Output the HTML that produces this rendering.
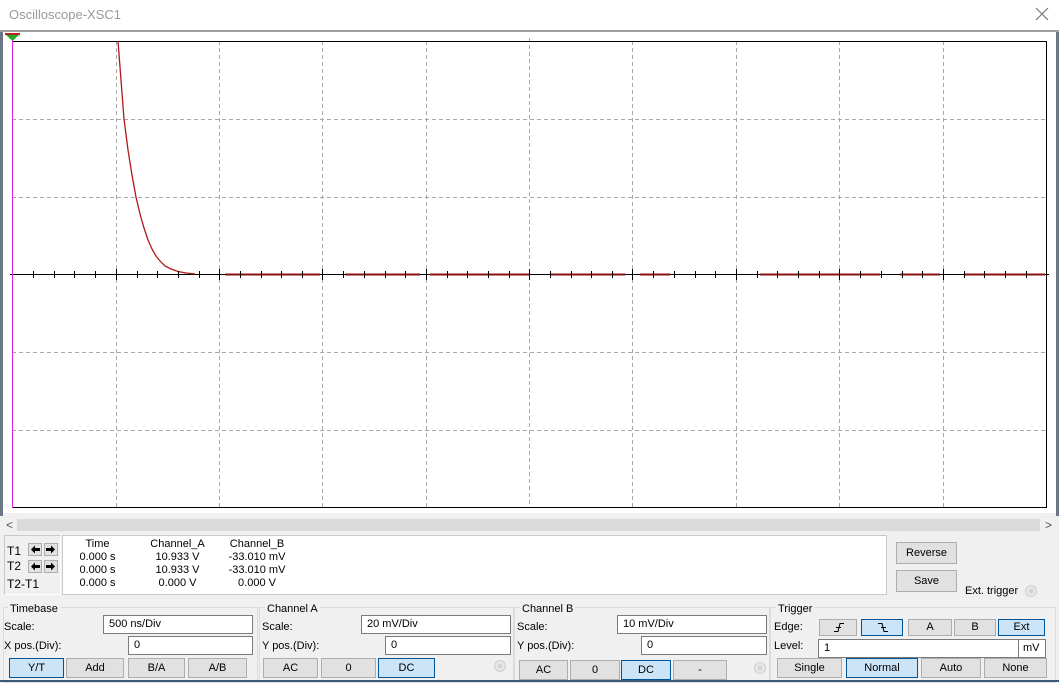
<!DOCTYPE html>
<html><head><meta charset="utf-8"><style>
*{margin:0;padding:0;box-sizing:border-box}
body{width:1059px;height:682px;background:#f0f0f0;font-family:"Liberation Sans",Tahoma,sans-serif;font-size:11px;color:#000;position:relative;overflow:hidden}
.a{position:absolute;white-space:nowrap}
.b{position:absolute;background:#e1e1e1;border:1px solid #adadad;text-align:center;font-size:11px}
.s{background:#cce4f7;border-color:#005499}
.i{position:absolute;background:#fff;border:1px solid #7a7a7a;padding-left:5px;font-size:11px}
.g{position:absolute;border:1px solid #dcdcdc;border-top-color:#dcdcdc}
.gt{position:absolute;background:#f0f0f0;padding:0 2px;font-size:11px}
.r{position:absolute;width:12px;height:12px;border-radius:50%;background:#e6e6e6;border:1px solid #cfcfcf}
.r::after{content:"";position:absolute;left:3px;top:3px;width:4px;height:4px;border-radius:50%;background:#d0d0d0}
.b svg{display:block}
</style></head><body>
<div class="a" style="left:0;top:0;width:1059px;height:30px;background:#fff"></div>
<div class="a" style="left:9px;top:7px;font-size:13px;color:#999">Oscilloscope-XSC1</div>
<svg class="a" style="left:1035px;top:7px" width="14" height="14"><path d="M1 1L13 13M13 1L1 13" stroke="#777" stroke-width="1.2"/></svg>
<div class="a" style="left:0;top:30px;width:1059px;height:2px;background:#a0a0a0"></div>
<div class="a" style="left:0;top:32px;width:3px;height:484px;background:#6b7785"></div>
<div class="a" style="left:1056px;top:32px;width:3px;height:484px;background:#6b7785"></div>
<div class="a" style="left:3px;top:32px;width:1053px;height:481px;background:#fff"></div>
<svg class="a" style="left:0;top:0" width="1059" height="520">
<g stroke="#a8a8a8" stroke-dasharray="4,3" stroke-width="1">
<path d="M116.5 41V508M219.5 41V508M322.5 41V508M426.5 41V508M632.5 41V508M736.5 41V508M839.5 41V508M943.5 41V508"/>
<path d="M12 119.5H1047M12 197.5H1047M12 352.5H1047M12 430.5H1047"/>
</g>
<path d="M529.5 38V508" stroke="#a8a8a8" stroke-dasharray="4,3"/>
<rect x="12.5" y="41.5" width="1034" height="466" fill="none" stroke="#000"/>
<path d="M10 274.5H1049" stroke="#000"/>
<path d="M12.5 36V508" stroke="#e020e0"/>
<polygon points="5,34 20,34 12.5,41" fill="#2a2"/><path d="M5 34H20" stroke="#b22" stroke-width="2"/>
<polyline fill="none" stroke="#b01818" stroke-width="1.3" points="118,41 121,80 124,119 128,150 132,175 136,197 140,214 144,228 148,240 152,249 156,256 160,261 165,266 171,269 178,271.5 186,273 195,274"/>
<g stroke="#8a1010" stroke-width="2">
<path d="M225 274.5H320M345 274.5H420M430 274.5H530M550 274.5H625M640 274.5H670M760 274.5H880M900 274.5H940M965 274.5H1045"/>
</g>
<g stroke="#000" stroke-width="1">
<path d="M33.5 271V278M54.5 271V278M74.5 271V278M95.5 271V278M137.5 271V278M157.5 271V278M178.5 271V278M199.5 271V278M240.5 271V278M261.5 271V278M281.5 271V278M302.5 271V278M343.5 271V278M364.5 271V278M385.5 271V278M405.5 271V278M447.5 271V278M467.5 271V278M488.5 271V278M509.5 271V278M550.5 271V278M571.5 271V278M591.5 271V278M612.5 271V278M653.5 271V278M674.5 271V278M695.5 271V278M715.5 271V278M757.5 271V278M777.5 271V278M798.5 271V278M819.5 271V278M860.5 271V278M881.5 271V278M902.5 271V278M922.5 271V278M964.5 271V278M984.5 271V278M1005.5 271V278M1026.5 271V278"/>
<path d="M116.5 269V280M219.5 269V280M322.5 269V280M426.5 269V280M529.5 269V280M632.5 269V280M736.5 269V280M839.5 269V280M943.5 269V280"/>
</g>
</svg>
<div class="a" style="left:17px;top:519px;width:1023px;height:12px;background:#dadada"></div>
<div class="a" style="left:6px;top:518px;font-size:12px;color:#555">&lt;</div>
<div class="a" style="left:1045px;top:518px;font-size:12px;color:#555">&gt;</div>
<div class="a" style="left:4px;top:535px;width:57px;height:60px;border:1px solid #c8c8c8;border-right-color:#fff;border-bottom-color:#fff"></div>
<div class="a" style="left:7px;top:544px;font-size:12px">T1</div>
<div class="a" style="left:7px;top:559px;font-size:12px">T2</div>
<div class="a" style="left:7px;top:577px;font-size:12px">T2-T1</div>
<div class="b" style="left:28px;top:543px;width:14px;height:13px"><svg width="12" height="11"><path d="M2 5.5L6 1.5V4H11V7H6V9.5Z" fill="#000"/></svg></div>
<div class="b" style="left:44px;top:543px;width:14px;height:13px"><svg width="12" height="11"><path d="M10 5.5L6 1.5V4H1V7H6V9.5Z" fill="#000"/></svg></div>
<div class="b" style="left:28px;top:560px;width:14px;height:13px"><svg width="12" height="11"><path d="M2 5.5L6 1.5V4H11V7H6V9.5Z" fill="#000"/></svg></div>
<div class="b" style="left:44px;top:560px;width:14px;height:13px"><svg width="12" height="11"><path d="M10 5.5L6 1.5V4H1V7H6V9.5Z" fill="#000"/></svg></div>
<div class="a" style="left:62px;top:535px;width:825px;height:60px;background:#fff;border:1px solid #c8c8c8"></div>
<div class="a" style="left:70px;top:538px;width:55px;text-align:center;line-height:13px">Time<br>0.000 s<br>0.000 s<br>0.000 s</div>
<div class="a" style="left:145px;top:538px;width:65px;text-align:center;line-height:13px">Channel_A<br>10.933 V<br>10.933 V<br>0.000 V</div>
<div class="a" style="left:222px;top:538px;width:70px;text-align:center;line-height:13px">Channel_B<br>-33.010 mV<br>-33.010 mV<br>0.000 V</div>
<div class="b" style="left:896px;top:542px;width:61px;height:22px;line-height:20px">Reverse</div>
<div class="b" style="left:896px;top:570px;width:61px;height:22px;line-height:20px">Save</div>
<div class="a" style="left:965px;top:585px">Ext. trigger</div>
<div class="r" style="left:1025px;top:585px"></div>
<div class="g" style="left:3px;top:607px;width:255px;height:76px"></div><div class="gt" style="left:8px;top:603px">Timebase</div>
<div class="g" style="left:259px;top:607px;width:255px;height:76px"></div><div class="gt" style="left:265px;top:603px">Channel A</div>
<div class="g" style="left:514px;top:607px;width:256px;height:76px"></div><div class="gt" style="left:520px;top:603px">Channel B</div>
<div class="g" style="left:770px;top:607px;width:286px;height:76px"></div><div class="gt" style="left:776px;top:603px">Trigger</div>
<div class="a" style="left:4px;top:621px">Scale:</div><div class="a" style="left:4px;top:640px">X pos.(Div):</div>
<div class="i" style="left:103px;top:615px;width:150px;height:19px;line-height:17px">500 ns/Div</div>
<div class="i" style="left:128px;top:636px;width:125px;height:19px;line-height:17px">0</div>
<div class="b s" style="left:9px;top:658px;width:55px;height:20px;line-height:18px">Y/T</div>
<div class="b" style="left:66px;top:658px;width:58px;height:20px;line-height:18px">Add</div>
<div class="b" style="left:128px;top:658px;width:57px;height:20px;line-height:18px">B/A</div>
<div class="b" style="left:188px;top:658px;width:59px;height:20px;line-height:18px">A/B</div>
<div class="a" style="left:262px;top:621px">Scale:</div><div class="a" style="left:262px;top:640px">Y pos.(Div):</div>
<div class="i" style="left:361px;top:615px;width:150px;height:19px;line-height:17px">20 mV/Div</div>
<div class="i" style="left:385px;top:636px;width:126px;height:19px;line-height:17px">0</div>
<div class="b" style="left:263px;top:658px;width:55px;height:20px;line-height:18px">AC</div>
<div class="b" style="left:321px;top:658px;width:55px;height:20px;line-height:18px">0</div>
<div class="b s" style="left:378px;top:658px;width:57px;height:20px;line-height:18px">DC</div>
<div class="r" style="left:494px;top:660px"></div>
<div class="a" style="left:517px;top:621px">Scale:</div><div class="a" style="left:517px;top:640px">Y pos.(Div):</div>
<div class="i" style="left:617px;top:615px;width:150px;height:19px;line-height:17px">10 mV/Div</div>
<div class="i" style="left:641px;top:636px;width:126px;height:19px;line-height:17px">0</div>
<div class="b" style="left:519px;top:660px;width:49px;height:20px;line-height:18px">AC</div>
<div class="b" style="left:570px;top:660px;width:50px;height:20px;line-height:18px">0</div>
<div class="b s" style="left:621px;top:660px;width:50px;height:20px;line-height:18px">DC</div>
<div class="b" style="left:673px;top:660px;width:54px;height:20px;line-height:18px">-</div>
<div class="r" style="left:754px;top:662px"></div>
<div class="a" style="left:774px;top:621px">Edge:</div><div class="a" style="left:774px;top:640px">Level:</div>
<div class="b" style="left:819px;top:619px;width:38px;height:17px"><svg width="36" height="15"><path d="M14 11.5H18L20 3.5H24M16 7.5H21" stroke="#000" fill="none"/></svg></div>
<div class="b s" style="left:861px;top:619px;width:42px;height:17px"><svg width="40" height="15"><path d="M16 3.5H20L22 11.5H26M19 7.5H24" stroke="#000" fill="none"/></svg></div>
<div class="b" style="left:908px;top:619px;width:44px;height:17px;line-height:15px">A</div>
<div class="b" style="left:954px;top:619px;width:42px;height:17px;line-height:15px">B</div>
<div class="b s" style="left:998px;top:619px;width:47px;height:17px;line-height:15px">Ext</div>
<div class="i" style="left:818px;top:639px;width:201px;height:19px;line-height:17px">1</div>
<div class="i" style="left:1018px;top:639px;width:28px;height:19px;line-height:17px;padding-left:4px">mV</div>
<div class="b" style="left:777px;top:658px;width:65px;height:20px;line-height:18px">Single</div>
<div class="b s" style="left:846px;top:658px;width:72px;height:20px;line-height:18px">Normal</div>
<div class="b" style="left:921px;top:658px;width:60px;height:20px;line-height:18px">Auto</div>
<div class="b" style="left:984px;top:658px;width:63px;height:20px;line-height:18px">None</div>
<div class="a" style="left:0;top:680px;width:1059px;height:2px;background:#3b5a7a"></div>
</body></html>
